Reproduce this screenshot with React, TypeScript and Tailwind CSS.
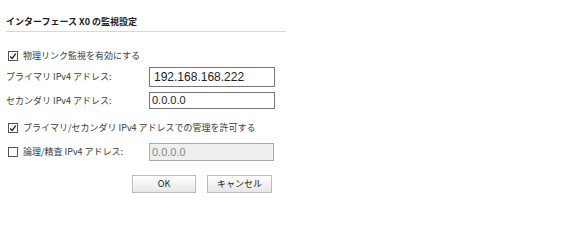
import React from 'react';

const jp = { fontFamily: '"Noto Sans CJK JP", "Liberation Sans", sans-serif' };

function Check({ checked }: { checked: boolean }) {
  return (
    <span className="inline-flex w-[10px] h-[10px] border border-[#555] bg-white items-center justify-center shrink-0">
      {checked && (
        <svg viewBox="0 0 10 10" className="w-[9px] h-[9px]">
          <path d="M1.5 5 L4 7.5 L8.5 1.5" fill="none" stroke="#222" strokeWidth="1.6" />
        </svg>
      )}
    </span>
  );
}

export default function App() {
  return (
    <div className="w-[576px] h-[220px] bg-white text-[#3a3a3a] text-[9px]" style={jp}>
      <div className="w-[280px] ml-[6px] pt-[16px]">
        <div className="font-bold text-[9px] text-[#222] leading-[12px] pb-[3px] border-b border-[#d8d8d8]">
          インターフェース X0 の監視設定
        </div>

        <div className="flex items-center gap-[5px] mt-[17px] ml-[2px] h-[14px]">
          <Check checked />
          <span>物理リンク監視を有効にする</span>
        </div>

        <div className="flex items-center mt-[4px] h-[20px]">
          <span className="w-[143px]">プライマリ IPv4 アドレス:</span>
          <div className="w-[126px] h-[20px] border border-[#777] bg-white px-[4px] flex items-center text-[12px] text-[#222] font-['Liberation_Sans']">
            192.168.168.222
          </div>
        </div>

        <div className="flex items-center mt-[5px] h-[17px]">
          <span className="w-[143px]">セカンダリ IPv4 アドレス:</span>
          <div className="w-[126px] h-[17px] border border-[#777] bg-white px-[2px] flex items-center text-[11px] text-[#222] font-['Liberation_Sans']">
            0.0.0.0
          </div>
        </div>

        <div className="flex items-center gap-[5px] mt-[12px] ml-[2px] h-[14px]">
          <Check checked />
          <span>プライマリ/セカンダリ IPv4 アドレスでの管理を許可する</span>
        </div>

        <div className="flex items-center mt-[8px] h-[18px]">
          <div className="w-[143px] flex items-center gap-[5px] ml-[2px]">
            <Check checked={false} />
            <span>論理/精査 IPv4 アドレス:</span>
          </div>
          <div className="w-[125px] h-[18px] -ml-[2px] border border-[#aaa] bg-[#efefef] px-[2px] flex items-center text-[11px] text-[#888] font-['Liberation_Sans']">
            0.0.0.0
          </div>
        </div>

        <div className="flex gap-[11px] mt-[14px] ml-[126px]">
          <button className="w-[64px] h-[18px] border border-[#bbb] bg-gradient-to-b from-white to-[#e6e6e6] text-[9px] text-[#222]">
            OK
          </button>
          <button className="w-[65px] h-[18px] border border-[#bbb] bg-gradient-to-b from-white to-[#e6e6e6] text-[9px] text-[#222]">
            キャンセル
          </button>
        </div>
      </div>
    </div>
  );
}
